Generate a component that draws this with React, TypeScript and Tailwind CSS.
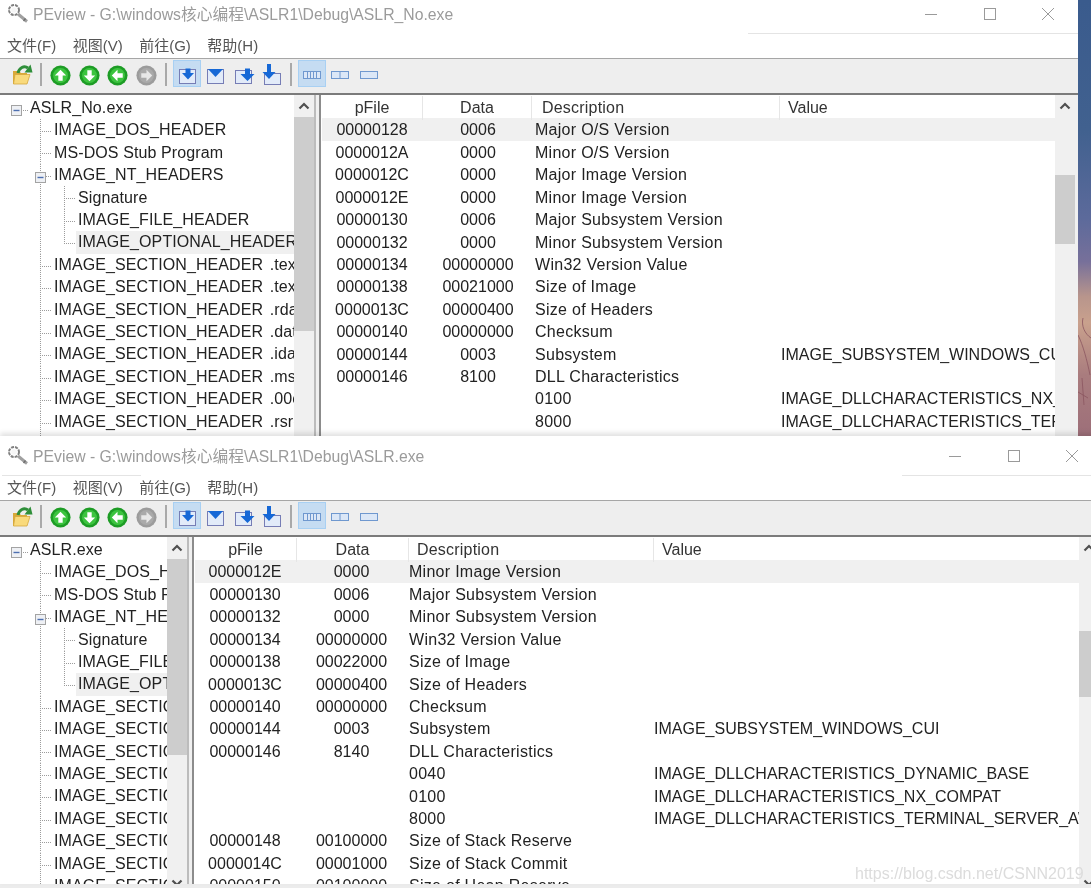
import type { ReactNode } from 'react';

type ListRow = [string, string, string, string?];

const sections = ['.textbss', '.text', '.rdata', '.data', '.idata', '.msvcjmc', '.00cfg', '.rsrc', '.reloc'];

const listOne: ListRow[] = [
  ['00000128', '0006', 'Major O/S Version'],
  ['0000012A', '0000', 'Minor O/S Version'],
  ['0000012C', '0000', 'Major Image Version'],
  ['0000012E', '0000', 'Minor Image Version'],
  ['00000130', '0006', 'Major Subsystem Version'],
  ['00000132', '0000', 'Minor Subsystem Version'],
  ['00000134', '00000000', 'Win32 Version Value'],
  ['00000138', '00021000', 'Size of Image'],
  ['0000013C', '00000400', 'Size of Headers'],
  ['00000140', '00000000', 'Checksum'],
  ['00000144', '0003', 'Subsystem', 'IMAGE_SUBSYSTEM_WINDOWS_CUI'],
  ['00000146', '8100', 'DLL Characteristics'],
  ['', '', '0100', 'IMAGE_DLLCHARACTERISTICS_NX_COMPAT'],
  ['', '', '8000', 'IMAGE_DLLCHARACTERISTICS_TERMINAL_SERVER_AWARE'],
];

const listTwo: ListRow[] = [
  ['0000012E', '0000', 'Minor Image Version'],
  ['00000130', '0006', 'Major Subsystem Version'],
  ['00000132', '0000', 'Minor Subsystem Version'],
  ['00000134', '00000000', 'Win32 Version Value'],
  ['00000138', '00022000', 'Size of Image'],
  ['0000013C', '00000400', 'Size of Headers'],
  ['00000140', '00000000', 'Checksum'],
  ['00000144', '0003', 'Subsystem', 'IMAGE_SUBSYSTEM_WINDOWS_CUI'],
  ['00000146', '8140', 'DLL Characteristics'],
  ['', '', '0040', 'IMAGE_DLLCHARACTERISTICS_DYNAMIC_BASE'],
  ['', '', '0100', 'IMAGE_DLLCHARACTERISTICS_NX_COMPAT'],
  ['', '', '8000', 'IMAGE_DLLCHARACTERISTICS_TERMINAL_SERVER_AWARE'],
  ['00000148', '00100000', 'Size of Stack Reserve'],
  ['0000014C', '00001000', 'Size of Stack Commit'],
  ['00000150', '00100000', 'Size of Heap Reserve'],
];

const AppIcon = () => (
  <svg width="22" height="22" viewBox="0 0 22 22" className="shrink-0">
    <circle cx="7" cy="7" r="5" fill="none" stroke="#808080" strokeWidth="2" strokeDasharray="3 1" />
    <circle cx="7" cy="7" r="2.8" fill="#f6f6f6" />
    <path d="M11 11 L20 18.5" stroke="#a0a0a0" strokeWidth="3" />
    <path d="M16.5 18 L18.5 15.5" stroke="#6f6f6f" strokeWidth="1.4" />
  </svg>
);

const FolderIcon = () => (
  <svg width="24" height="24" viewBox="0 0 24 24">
    <path d="M3 8 H9 L11 10 H17 V21 H3 Z" fill="#d9a93a" />
    <path d="M3.5 21 L5 11.5 H20 L17 21 Z" fill="#f9da7c" stroke="#d6a83c" strokeWidth="0.8" />
    <path d="M8 10 C9 5 14 2 18 5" fill="none" stroke="#2f8f3a" strokeWidth="3" />
    <path d="M14.5 9.5 L22.5 9.5 L20.5 1.5 Z" fill="#2f8f3a" />
  </svg>
);

const RoundArrow = ({ angle, off }: { angle: number; off?: boolean }) => (
  <svg width="21" height="21" viewBox="0 0 24 24">
    <circle cx="12" cy="12" r="11.5" fill={off ? '#9c9c9c' : '#1d9c25'} />
    <circle cx="12" cy="12" r="8.5" fill={off ? '#aaaaaa' : '#3cc43f'} />
    <path
      d="M12 5.5 L18.5 12 H14.5 V18 H9.5 V12 H5.5 Z"
      fill={off ? '#e8e8e8' : '#ffffff'}
      transform={`rotate(${angle} 12 12)`}
    />
  </svg>
);

const Tray = ({ kind }: { kind: 'a' | 'b' | 'c' | 'd' }) => (
  <svg width="24" height="24" viewBox="0 0 24 24">
    {kind === 'a' && (
      <>
        <rect x="4.5" y="6.5" width="16" height="14" fill="#e2ebf9" stroke="#767db5" />
        <path d="M10.5 5.5 H15.5 V10 H19 L13 16.5 L7 10 H10.5 Z" fill="#1668d6" />
      </>
    )}
    {kind === 'b' && (
      <>
        <rect x="4.5" y="6.5" width="16" height="14" fill="#e2ebf9" stroke="#767db5" />
        <path d="M5 6 H20 L12.5 14 Z" fill="#1668d6" />
      </>
    )}
    {kind === 'c' && (
      <>
        <rect x="3.5" y="7.5" width="16" height="13" fill="#e2ebf9" stroke="#767db5" />
        <path d="M13 5.5 H18 V11 H22.5 L15.5 18 L8.5 11 H13 Z" fill="#1668d6" />
      </>
    )}
    {kind === 'd' && (
      <>
        <rect x="4.5" y="10.5" width="16" height="11" fill="#e2ebf9" stroke="#767db5" />
        <path d="M7 1 H11 V9 H15.5 L9 16 L2.5 9 H7 Z" fill="#1668d6" />
      </>
    )}
  </svg>
);

const ViewIcon = ({ parts }: { parts: number }) => (
  <svg width="20" height="12" viewBox="0 0 20 12">
    <rect x="1.5" y="2.5" width="17" height="7" fill="#dbe7f7" stroke="#6f98cf" />
    {parts === 4 && <path d="M5.5 3 V9 M8.5 3 V9 M11.5 3 V9 M14.5 3 V9" stroke="#6f98cf" />}
    {parts === 2 && <path d="M10 3 V9" stroke="#6f98cf" />}
  </svg>
);

const Slot = ({ on, children }: { on?: boolean; children: ReactNode }) => (
  <div
    className={`flex h-[27px] w-[28.5px] items-center justify-center border pt-[3px] ${
      on ? 'border-[#a8d0f3] bg-[#c5dcf2]' : 'border-transparent'
    }`}
  >
    {children}
  </div>
);

const Sep = ({ className }: { className: string }) => (
  <div className={`mt-[3px] h-[23px] w-[2px] bg-[#a9a9a9] ${className}`} />
);

const Toolbar = () => (
  <div className="flex h-[37px] shrink-0 items-start border-t border-b-2 border-t-[#a6a6a6] border-b-[#7b7b7b] bg-[#eeeeee] pt-px pl-[8px]">
    <Slot><FolderIcon /></Slot>
    <Sep className="ml-[3px] mr-[5px]" />
    <Slot><RoundArrow angle={0} /></Slot>
    <Slot><RoundArrow angle={180} /></Slot>
    <Slot><RoundArrow angle={270} /></Slot>
    <Slot><RoundArrow angle={90} off /></Slot>
    <Sep className="ml-[4px] mr-[6px]" />
    <Slot on><Tray kind="a" /></Slot>
    <Slot><Tray kind="b" /></Slot>
    <Slot><Tray kind="c" /></Slot>
    <Slot><Tray kind="d" /></Slot>
    <Sep className="ml-[3px] mr-[6px]" />
    <Slot on><ViewIcon parts={4} /></Slot>
    <Slot><ViewIcon parts={2} /></Slot>
    <Slot><ViewIcon parts={1} /></Slot>
  </div>
);

const Box = ({ x }: { x: number }) => (
  <>
    <rect x={x + 0.5} y="8.5" width="10" height="10" fill="#eef0f4" stroke="#a3a3a3" />
    <path d={`M${x + 2.5} 13.5 H${x + 8.5}`} stroke="#4d6fb0" strokeWidth="1.4" />
  </>
);

// level 0 = root, 1 = child of root, 2 = child of IMAGE_NT_HEADERS
const guideWidth = [30, 54, 76];

const Guides = ({ level, open, last }: { level: number; open?: boolean; last?: boolean }) => (
  <svg width={guideWidth[level]} height="22.43" viewBox={`0 0 ${guideWidth[level]} 22.43`} className="shrink-0">
    <g stroke="#9a9a9a" strokeDasharray="1 1" fill="none">
      {level > 0 && <path d="M40.5 0 V22.43" />}
      {level === 1 && <path d="M40 12.5 H52" />}
      {level === 2 && <path d={`M64.5 0 V${last ? 12.5 : 22.43}`} />}
      {level === 2 && <path d="M64 12.5 H76" />}
      {level === 0 && <path d="M21 13.5 H28" />}
    </g>
    {level === 0 && <Box x={11} />}
    {level === 1 && open && <Box x={35} />}
  </svg>
);

const TreeRow = ({ label, level, open, last, picked, section }: { label: string; level: number; open?: boolean; last?: boolean; picked?: boolean; section?: boolean }) => (
  <div className="flex h-[22.43px] items-center whitespace-nowrap">
    <Guides level={level} open={open} last={last} />
    <div className={`flex h-full flex-1 items-center ${level === 2 ? 'pl-[2px]' : ''} ${picked ? 'bg-[#f0f0f0]' : ''}`}>
      <span className={`tracking-[0.1px] text-[#222222] ${section ? '[word-spacing:2px]' : ''}`}>{label}</span>
    </div>
  </div>
);

const Tree = ({ root, width }: { root: string; width: string }) => (
  <div className={`h-full shrink-0 overflow-hidden pt-[1.6px] ${width}`}>
    <TreeRow label={root} level={0} />
    <TreeRow label="IMAGE_DOS_HEADER" level={1} />
    <TreeRow label="MS-DOS Stub Program" level={1} />
    <TreeRow label="IMAGE_NT_HEADERS" level={1} open />
    <TreeRow label="Signature" level={2} />
    <TreeRow label="IMAGE_FILE_HEADER" level={2} />
    <TreeRow label="IMAGE_OPTIONAL_HEADER" level={2} last picked />
    {sections.map((s) => (
      <TreeRow key={s} label={`IMAGE_SECTION_HEADER ${s}`} level={1} section />
    ))}
  </div>
);

const Chevron = ({ down }: { down?: boolean }) => (
  <svg width="12" height="8" viewBox="0 0 12 8">
    <path d={down ? 'M1.5 1.5 L6 6 L10.5 1.5' : 'M1.5 6.5 L6 2 L10.5 6.5'} fill="none" stroke="#505050" strokeWidth="2.2" />
  </svg>
);

const ScrollBar = ({ gap, thumb, rest }: { gap: string; thumb: string; rest?: string }) => (
  <div className="flex h-full w-[20px] shrink-0 flex-col items-stretch overflow-hidden bg-[#f0f0f0]">
    <div className="flex h-[22px] shrink-0 items-center justify-center"><Chevron /></div>
    <div className={`shrink-0 ${gap}`} />
    <div className={`shrink-0 bg-[#cdcdcd] ${thumb}`} />
    {rest && <div className={`shrink-0 ${rest}`} />}
    {rest && <div className="flex h-[22px] shrink-0 items-center justify-center"><Chevron down /></div>}
  </div>
);

const List = ({ rows, headCols, rowCols, descPad }: { rows: ListRow[]; headCols: string; rowCols: string; descPad: string }) => (
  <div className="min-w-0 flex-1 overflow-hidden whitespace-nowrap pt-px pl-px">
    <div className={`grid h-[22.43px] items-center text-[#333333] ${headCols}`}>
      <div className="flex h-full items-center justify-center border-r border-[#e6e6e6]">pFile</div>
      <div className="flex h-full items-center justify-center border-r border-[#e6e6e6]">Data</div>
      <div className={`flex h-full items-center border-r border-[#e6e6e6] tracking-[0.2px] ${descPad}`}>Description</div>
      <div className="pl-[8px]">Value</div>
    </div>
    {rows.map((r, i) => (
      <div
        key={i}
        className={`grid h-[22.43px] items-center text-[#222222] ${rowCols} ${i === 0 ? 'bg-[#f0f0f0]' : ''}`}
      >
        <div className="text-center">{r[0]}</div>
        <div className="text-center">{r[1]}</div>
        <div className="pl-px tracking-[0.28px]">{r[2]}</div>
        <div className="pl-px">{r[3]}</div>
      </div>
    ))}
  </div>
);

const WindowControls = () => (
  <div className="ml-auto flex items-center gap-[46.5px] pr-[24px]">
    <svg width="12" height="12" viewBox="0 0 12 12"><path d="M0 6.5 H12" stroke="#9a9a9a" /></svg>
    <svg width="12" height="12" viewBox="0 0 12 12"><rect x="0.5" y="0.5" width="11" height="11" fill="none" stroke="#9a9a9a" /></svg>
    <svg width="12" height="12" viewBox="0 0 12 12"><path d="M0 0 L12 12 M12 0 L0 12" stroke="#9a9a9a" /></svg>
  </div>
);

const Menu = () => (
  <div className="flex h-[24px] shrink-0 items-center gap-[16.5px] pl-[7px] text-[15px] text-[#555555]">
    <span>文件(F)</span>
    <span>视图(V)</span>
    <span>前往(G)</span>
    <span>帮助(H)</span>
  </div>
);

type BarProps = { gap: string; thumb: string; rest?: string };

type WindowProps = {
  title: string;
  root: string;
  rows: ListRow[];
  className: string;
  titleBar: string;
  rule: ReactNode;
  treeWidth: string;
  treeBar: BarProps;
  listBar: BarProps;
  headCols: string;
  rowCols: string;
  descPad: string;
  watermark?: boolean;
};

const PeWindow = ({ title, root, rows, className, titleBar, rule, treeWidth, treeBar, listBar, headCols, rowCols, descPad, watermark }: WindowProps) => (
  <div className={`flex shrink-0 flex-col bg-white ${className}`}>
    <div className={`flex shrink-0 items-center gap-[4px] pl-[7px] ${titleBar}`}>
      <AppIcon />
      <span className="pt-[2px] text-[15.75px] text-[#9b9b9b]">{title}</span>
      <WindowControls />
    </div>
    {rule}
    <Menu />
    <Toolbar />
    <div className="relative flex min-h-0 flex-1 overflow-hidden">
      <Tree root={root} width={treeWidth} />
      <ScrollBar {...treeBar} />
      <div className="w-[7px] shrink-0 border-r-2 border-l-2 border-r-[#8c8c8c] border-l-[#bcbcbc] bg-[#f0f0f0]" />
      <List rows={rows} headCols={headCols} rowCols={rowCols} descPad={descPad} />
      <ScrollBar {...listBar} />
      <div className="w-[3px] shrink-0 bg-[#f0f0f0]" />
      {watermark && (
        <span className="absolute top-[325px] left-[855px] text-[16px] text-[#dcdcdc]">https://blog.csdn.net/CSNN2019</span>
      )}
    </div>
  </div>
);

export default function App() {
  return (
    <div className="h-[888px] w-[1091px] overflow-hidden bg-[#ececec] font-['Liberation_Sans','Noto_Sans_CJK_SC',sans-serif] text-[16px] blur-[0.35px]">
      <div className="flex h-[436px]">
        <PeWindow
          title="PEview - G:\windows核心编程\ASLR1\Debug\ASLR_No.exe"
          root="ASLR_No.exe"
          rows={listOne}
          className="h-[436px] w-[1078px]"
          titleBar="h-[33px] pb-[5px]"
          rule={<div className="ml-[748px] h-px shrink-0 bg-[#e4e4e4]" />}
          treeWidth="w-[294px]"
          treeBar={{ gap: 'h-[0px]', thumb: 'h-[214px]' }}
          listBar={{ gap: 'h-[58px]', thumb: 'h-[69px]' }}
          headCols="grid-cols-[101px_109px_248px_1fr]"
          rowCols="grid-cols-[100px_112px_246px_1fr]"
          descPad="pl-[10px]"
        />
        <div className="relative flex-1 overflow-hidden bg-[linear-gradient(180deg,#3a5b8d_0%,#41618f_30%,#5c6a9b_50%,#77709a_60%,#b8958c_68%,#c9a18d_74%,#a97c7e_86%,#9d6f79_100%)]">
          <svg width="13" height="436" viewBox="0 0 13 436" className="absolute top-0 left-0">
            <path d="M5 318 C3 326 7 334 13 338 M0 335 C5 345 9 360 12 375 M0 392 L10 398 M4 378 L6 405" fill="none" stroke="#8a5560" strokeWidth="0.8" />
          </svg>
        </div>
      </div>
      <PeWindow
        title="PEview - G:\windows核心编程\ASLR1\Debug\ASLR.exe"
        root="ASLR.exe"
        rows={listTwo}
        className="relative h-[448px] w-[1102px] shadow-[0_-3px_5px_rgba(0,0,0,0.12)]"
        titleBar="h-[39px]"
        rule={
          <div className="flex h-px shrink-0">
            <div className="ml-[2px] w-[139px] bg-[#e4e4e4]" />
            <div className="ml-[761px] flex-1 bg-[#e4e4e4]" />
          </div>
        }
        treeWidth="w-[167px]"
        treeBar={{ gap: 'h-[0px]', thumb: 'h-[196px]', rest: 'h-[117px]' }}
        listBar={{ gap: 'h-[72px]', thumb: 'h-[66px]', rest: 'h-[175px]' }}
        headCols="grid-cols-[102px_112px_245px_1fr]"
        rowCols="grid-cols-[100px_113px_245px_1fr]"
        descPad="pl-[8px]"
        watermark
      />
    </div>
  );
}
